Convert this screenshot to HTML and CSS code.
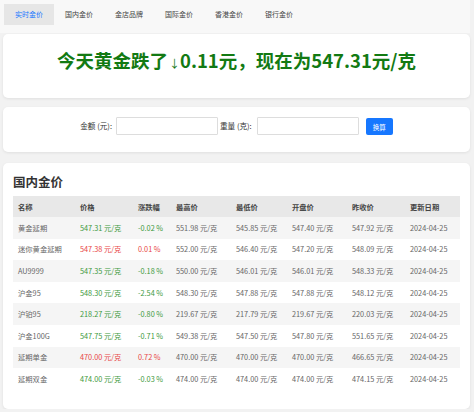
FILE: index.html
```html
<!DOCTYPE html>
<html lang="zh-CN">
<head>
<meta charset="utf-8">
<title>实时金价</title>
<link rel="stylesheet" href="styles.css">
</head>
<body>
<nav class="tabs">
  <a class="tab active">实时金价</a>
  <a class="tab">国内金价</a>
  <a class="tab">金店品牌</a>
  <a class="tab">国际金价</a>
  <a class="tab">香港金价</a>
  <a class="tab">银行金价</a>
</nav>
<main class="page">
  <section class="card headline">
    <h1>今天黄金跌了<span class="arrow">↓</span>0.11元，现在为547.31元/克</h1>
  </section>
  <section class="card converter">
    <label class="lbl">金额 (元):</label>
    <input class="field" type="text">
    <label class="lbl lbl2">重量 (克):</label>
    <input class="field" type="text">
    <button class="btn">换算</button>
  </section>
  <section class="card prices">
    <h2>国内金价</h2>
    <table class="tbl">
      <colgroup>
        <col style="width:62px"><col style="width:58px"><col style="width:38px"><col style="width:60px"><col style="width:56px"><col style="width:60px"><col style="width:58px"><col style="width:55px">
      </colgroup>
      <thead>
        <tr><th>名称</th><th>价格</th><th>涨跌幅</th><th>最高价</th><th>最低价</th><th>开盘价</th><th>昨收价</th><th>更新日期</th></tr>
      </thead>
      <tbody>
        <tr><td>黄金延期</td><td class="down">547.31 元/克</td><td class="down">-0.02 %</td><td>551.98 元/克</td><td>545.85 元/克</td><td>547.40 元/克</td><td>547.92 元/克</td><td>2024-04-25</td></tr>
        <tr><td>迷你黄金延期</td><td class="up">547.38 元/克</td><td class="up">0.01 %</td><td>552.00 元/克</td><td>546.40 元/克</td><td>547.20 元/克</td><td>548.09 元/克</td><td>2024-04-25</td></tr>
        <tr><td>AU9999</td><td class="down">547.35 元/克</td><td class="down">-0.18 %</td><td>550.00 元/克</td><td>546.01 元/克</td><td>546.01 元/克</td><td>548.33 元/克</td><td>2024-04-25</td></tr>
        <tr><td>沪金95</td><td class="down">548.30 元/克</td><td class="down">-2.54 %</td><td>548.30 元/克</td><td>547.88 元/克</td><td>547.88 元/克</td><td>548.12 元/克</td><td>2024-04-25</td></tr>
        <tr><td>沪铂95</td><td class="down">218.27 元/克</td><td class="down">-0.80 %</td><td>219.67 元/克</td><td>217.79 元/克</td><td>219.67 元/克</td><td>220.03 元/克</td><td>2024-04-25</td></tr>
        <tr><td>沪金100G</td><td class="down">547.75 元/克</td><td class="down">-0.71 %</td><td>549.38 元/克</td><td>547.50 元/克</td><td>547.80 元/克</td><td>551.65 元/克</td><td>2024-04-25</td></tr>
        <tr><td>延期单金</td><td class="up">470.00 元/克</td><td class="up">0.72 %</td><td>470.00 元/克</td><td>470.00 元/克</td><td>470.00 元/克</td><td>466.65 元/克</td><td>2024-04-25</td></tr>
        <tr><td>延期双金</td><td class="down">474.00 元/克</td><td class="down">-0.03 %</td><td>474.00 元/克</td><td>474.00 元/克</td><td>474.00 元/克</td><td>474.15 元/克</td><td>2024-04-25</td></tr>
      </tbody>
    </table>
  </section>
</main>
</body>
</html>
```
FILE: styles.css
```css
* { box-sizing: border-box; }
html, body { margin: 0; padding: 0; }
body {
  background: #f2f2f2;
  font-family: "Noto Sans CJK SC", "Noto Sans", sans-serif;
  color: #555;
}
.tabs {
  display: flex;
  background: #f8f8f8;
  padding: 4px 4px 8px;
  margin-right: 4px;
}
.tab {
  display: block;
  height: 21px;
  line-height: 21px;
  padding: 0 11px;
  font-size: 7px;
  color: #444;
  white-space: nowrap;
}
.tab.active {
  background: #e6e6e6;
  color: #1677ff;
}
.page {
  display: flex;
  flex-direction: column;
  padding: 1px 4px 0 3px;
}
.card {
  background: #fff;
  border-radius: 5px;
  box-shadow: 0 1px 3px rgba(0,0,0,0.08);
}
.headline {
  height: 64px;
  padding: 14px 0 0;
}
.headline h1 {
  margin: 0;
  text-align: center;
  font-size: 18.5px;
  line-height: 24px;
  font-weight: 700;
  color: #137a13;
}
.headline .arrow {
  font-size: 11px;
  font-weight: 400;
  margin-left: 1px;
}
.converter {
  margin-top: 9px;
  height: 45px;
  display: flex;
  justify-content: center;
  align-items: flex-start;
  padding-top: 10px;
}
.lbl {
  font-size: 7.6px;
  line-height: 18px;
  color: #333;
  margin-right: 4px;
}
.lbl2 {
  margin-right: 5px;
}
.field {
  width: 102px;
  height: 18px;
  border: 1px solid #ddd;
  border-radius: 1px;
  margin: 0 2px 0 0;
  padding: 0;
}
.btn {
  margin-left: 5px;
  margin-top: 1px;
  width: 27px;
  height: 17px;
  border: 0;
  border-radius: 2px;
  background: #1677ff;
  color: #fff;
  font-family: inherit;
  font-size: 6.5px;
  padding: 0;
}
.prices {
  margin-top: 11px;
  height: 246px;
  padding: 10px 10px 0;
}
.prices h2 {
  margin: 0 0 5px;
  font-size: 12.5px;
  line-height: 18px;
  font-weight: 700;
  color: #333;
}
.tbl {
  width: 100%;
  table-layout: fixed;
  border-collapse: collapse;
  font-size: 7.3px;
}
.tbl th, .tbl td {
  text-align: left;
  padding: 0 5px;
  white-space: nowrap;
  overflow: hidden;
}
.tbl th {
  height: 21px;
  background: #e8e8e8;
  color: #444;
  font-weight: 600;
}
.tbl td {
  height: 21.6px;
  color: #666;
}
.tbl tbody tr:nth-child(odd) td { background: #f5f5f5; }
.tbl td.down { color: #3d993d; }
.tbl td.up { color: #e84545; }
```
